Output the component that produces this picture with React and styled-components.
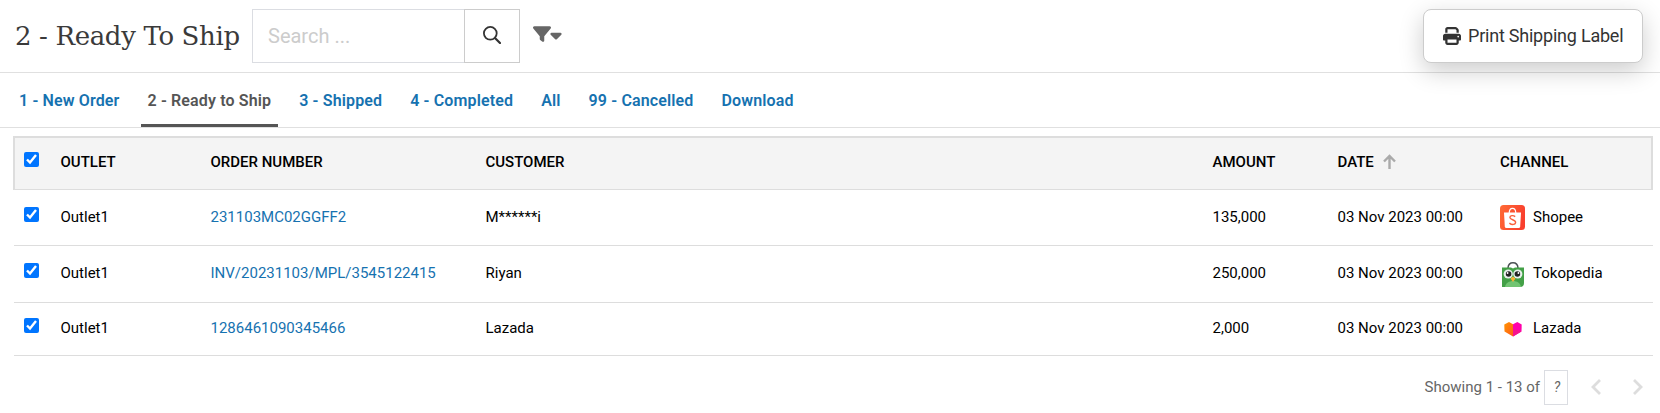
import React, { useState } from 'react';
import styled, { createGlobalStyle } from 'styled-components';
import { FaFilter, FaCaretDown, FaPrint } from 'react-icons/fa6';

const GlobalStyle = createGlobalStyle`
  * {
    box-sizing: border-box;
  }

  body {
    margin: 0;
    background: #fff;
    color: #000;
    font-family: Roboto, "Liberation Sans", sans-serif;
    font-size: 15px;
    overflow: hidden;
  }
`;

const TopBar = styled.header`
  display: flex;
  align-items: flex-start;
  height: 73px;
  padding: 9px 17px 0 15px;
  border-bottom: 1px solid #e0e0e0;
`;

const Title = styled.h1`
  width: 237px;
  margin: 0;
  font-family: "Roboto Slab", "DejaVu Serif", serif;
  font-size: 26px;
  font-weight: 400;
  letter-spacing: -0.35px;
  line-height: 54px;
  white-space: nowrap;
  color: #3a3a3a;
`;

const SearchGroup = styled.div`
  display: flex;
  height: 54px;
`;

const SearchInput = styled.input`
  width: 212px;
  padding: 0 15px;
  border: 1px solid #dbdde2;
  border-right: 0;
  border-radius: 0;
  font-family: inherit;
  font-size: 20px;
  outline: none;

  &::placeholder {
    color: #ccc;
  }
`;

const SearchButton = styled.button`
  display: flex;
  align-items: center;
  justify-content: center;
  width: 56px;
  padding: 0 0 2px;
  border: 1px solid #ccc;
  background: #fff;
  color: #333;
  cursor: pointer;
`;

const FilterButton = styled.button`
  display: flex;
  align-items: center;
  height: 50px;
  margin-left: 13px;
  padding: 0;
  border: 0;
  background: none;
  color: #666;
  cursor: pointer;

  svg + svg {
    margin: 2px 0 0 -4px;
  }
`;

const PrintButton = styled.button`
  display: flex;
  align-items: center;
  gap: 7px;
  width: 220px;
  height: 54px;
  margin-left: auto;
  padding: 0 0 1px 19px;
  border: 1px solid #ccc;
  border-radius: 8px;
  background: #fff;
  box-shadow: 0 8px 24px rgba(0, 0, 0, 0.2);
  color: #333;
  font-family: inherit;
  font-size: 18px;
  letter-spacing: -0.22px;
  white-space: nowrap;
  cursor: pointer;
`;

const Tabs = styled.nav`
  display: flex;
  height: 55px;
  padding-left: 12px;
  border-bottom: 1px solid #e0e0e0;
`;

const Tab = styled.a`
  height: 54px;
  margin-right: 14px;
  padding: 0 7px;
  border-bottom: ${({ $active }) => ($active ? '3px solid #555' : '0')};
  color: ${({ $active }) => ($active ? '#555' : '#1672b0')};
  font-size: 16px;
  font-weight: 600;
  letter-spacing: 0.14px;
  line-height: 55px;
  white-space: nowrap;
  cursor: pointer;
`;

const Table = styled.div`
  margin: 8px 7px 0 13px;
`;

const Row = styled.div`
  display: grid;
  grid-template-columns: 36.5px 150px 275px 727px 125px 162.5px 1fr;
  align-items: center;
  height: ${({ $height }) => $height}px;
  margin-left: 1px;
  padding: 0 0 2px 10px;
  border-bottom: 1px solid #ddd;
  white-space: nowrap;
`;

const HeadRow = styled(Row)`
  margin-left: 0;
  padding: 0 0 4px 9px;
  border: 2px solid #ddd;
  border-bottom-width: 1px;
  background: #f4f4f4;
  font-weight: 500;
  text-transform: uppercase;
`;

const Checkbox = styled.input.attrs({ type: 'checkbox' })`
  width: 15px;
  height: 15px;
  margin: 0 0 5px;
  accent-color: #0075ff;
`;

const OrderLink = styled.a`
  color: #1672b0;
  cursor: pointer;
`;

const SortLabel = styled.span`
  display: flex;
  align-items: center;
  gap: 9px;
`;

const Channel = styled.span`
  display: flex;
  align-items: center;
  gap: 8px;

  svg {
    margin-top: 2px;
  }
`;

const Footer = styled.footer`
  display: flex;
  align-items: center;
  justify-content: flex-end;
  height: 35px;
  margin-top: 14px;
  padding: 0 17px 2px 0;
  color: #666;
`;

const PageTotal = styled.span`
  width: 24px;
  height: 35px;
  margin: 2px 23px 0 4px;
  padding-left: 2px;
  border: 1px solid #dbdde2;
  font-size: 14px;
  font-style: italic;
  line-height: 33px;
  text-align: center;
`;

const PageButton = styled.button`
  display: flex;
  margin-left: ${({ $gap }) => $gap || 0}px;
  padding: 0;
  border: 0;
  background: none;
  color: #ddd;
`;

const SearchIcon = () => (
  <svg width="18" height="18" viewBox="0 0 18 18" fill="none" stroke="currentColor">
    <circle cx="7.3" cy="7.3" r="6.4" strokeWidth="1.8" />
    <path d="M12 12l5 5" strokeWidth="2.2" strokeLinecap="round" />
  </svg>
);

const SortArrow = () => (
  <svg width="13" height="15" viewBox="0 0 13 15" fill="none" stroke="#aaa" strokeWidth="2.4">
    <path d="M6.5 15V2M1 7.5l5.5-5.5L12 7.5" />
  </svg>
);

const Chevron = ({ right }) => (
  <svg width="10" height="16" viewBox="0 0 10 16" fill="none" stroke="currentColor" strokeWidth="2.8">
    <path d={right ? 'M1 1l7 7-7 7' : 'M9 1L2 8l7 7'} />
  </svg>
);

const ShopeeLogo = () => (
  <svg width="25" height="25" viewBox="0 0 25 25">
    <defs>
      <linearGradient id="shopee" x1="0" y1="0" x2="1" y2="0.3">
        <stop offset="0" stopColor="#ff6b35" />
        <stop offset="1" stopColor="#f9402e" />
      </linearGradient>
    </defs>
    <rect width="25" height="25" rx="3.5" fill="url(#shopee)" />
    <path d="M9.2 8C9.4 1.9 15.6 1.9 15.8 8" fill="none" stroke="#fff" strokeWidth="1.2" />
    <path d="M4 7.5h17l-.8 14q-.1 1.5-1.6 1.5H6.4q-1.5 0-1.6-1.5z" fill="#fff" />
    <path
      d="M15.2 11.6c-2-1.6-5.3-1.3-5.3 1 0 2.6 5.7 1.7 5.7 4.7 0 2.5-3.7 2.9-6.2.8"
      fill="none"
      stroke="#f9603c"
      strokeWidth="1.4"
    />
  </svg>
);

const TokopediaLogo = () => (
  <svg width="25" height="27" viewBox="0 0 25 27">
    <path d="M8 7C8.5 0 17.5 0 18 7" fill="none" stroke="#4b5054" strokeWidth="1.5" />
    <path d="M2 6.5h9l2 1 2-1h9V22q0 4-4 4H2z" fill="#43a047" />
    <path d="M5 26c1-8 15-8 16 0z" fill="#72c472" />
    <circle cx="8.2" cy="13" r="4.6" fill="#e8f0ec" />
    <circle cx="17.8" cy="13" r="4.6" fill="#e8f0ec" />
    <circle cx="8.6" cy="13" r="2.8" fill="#222" />
    <circle cx="17.4" cy="13" r="2.8" fill="#222" />
    <circle cx="7.6" cy="12" r="0.9" fill="#fff" />
    <circle cx="18.4" cy="12" r="0.9" fill="#fff" />
    <path d="M10.5 17.5l2.500-2 2.500 2-2.500 3.500z" fill="#f9b233" />
  </svg>
);

const LazadaLogo = () => (
  <svg width="25" height="25" viewBox="0 0 25 25">
    <defs>
      <linearGradient id="lazada" x1="0" y1="0" x2="1" y2="1">
        <stop offset="0" stopColor="#ff9500" />
        <stop offset="1" stopColor="#ff5a1a" />
      </linearGradient>
    </defs>
    <path d="M4.300 7.500L9 5l4 2.300V19.500l-8.500-5z" fill="url(#lazada)" />
    <path d="M13 7.300L17.300 5l4.400 2.500-.2 7-8.500 5z" fill="#f0a" />
    <path d="M13 12v7.500l8.500-5z" fill="#f5148c" />
  </svg>
);

const tabs = ['1 - New Order', '2 - Ready to Ship', '3 - Shipped', '4 - Completed', 'All', '99 - Cancelled', 'Download'];

const orders = [
  { number: '231103MC02GGFF2', customer: 'M******i', amount: '135,000', channel: 'Shopee', Logo: ShopeeLogo, height: 56 },
  { number: 'INV/20231103/MPL/3545122415', customer: 'Riyan', amount: '250,000', channel: 'Tokopedia', Logo: TokopediaLogo, height: 57 },
  { number: '1286461090345466', customer: 'Lazada', amount: '2,000', channel: 'Lazada', Logo: LazadaLogo, height: 53 },
];

const App = () => {
  const [activeTab, setActiveTab] = useState(1);
  const [selected, setSelected] = useState([true, true, true]);
  const allSelected = selected.every(Boolean);
  const toggleAll = () => setSelected(selected.map(() => !allSelected));
  const toggle = (id) => setSelected(selected.map((value, index) => (index === id ? !value : value)));

  return (
    <>
      <GlobalStyle />
      <TopBar>
        <Title>2 - Ready To Ship</Title>
        <SearchGroup>
          <SearchInput placeholder="Search ..." />
          <SearchButton aria-label="Search"><SearchIcon /></SearchButton>
        </SearchGroup>
        <FilterButton aria-label="Filter">
          <FaFilter size={18} />
          <FaCaretDown size={18} />
        </FilterButton>
        <PrintButton>
          <FaPrint size={18} />
          Print Shipping Label
        </PrintButton>
      </TopBar>
      <Tabs>
        {tabs.map((tab, index) => (
          <Tab key={tab} $active={index === activeTab} onClick={() => setActiveTab(index)}>{tab}</Tab>
        ))}
      </Tabs>
      <Table>
        <HeadRow $height={54}>
          <Checkbox checked={allSelected} onChange={toggleAll} />
          <span>Outlet</span>
          <span>Order Number</span>
          <span>Customer</span>
          <span>Amount</span>
          <SortLabel>
            Date
            <SortArrow />
          </SortLabel>
          <span>Channel</span>
        </HeadRow>
        {orders.map(({ number, customer, amount, channel, Logo, height }, index) => (
          <Row key={number} $height={height}>
            <Checkbox checked={selected[index]} onChange={() => toggle(index)} />
            <span>Outlet1</span>
            <OrderLink>{number}</OrderLink>
            <span>{customer}</span>
            <span>{amount}</span>
            <span>03 Nov 2023 00:00</span>
            <Channel>
              <Logo />
              {channel}
            </Channel>
          </Row>
        ))}
      </Table>
      <Footer>
        Showing 1 - 13 of
        <PageTotal>?</PageTotal>
        <PageButton aria-label="Previous page"><Chevron /></PageButton>
        <PageButton aria-label="Next page" $gap={32}><Chevron right /></PageButton>
      </Footer>
    </>
  );
};

export default App;
